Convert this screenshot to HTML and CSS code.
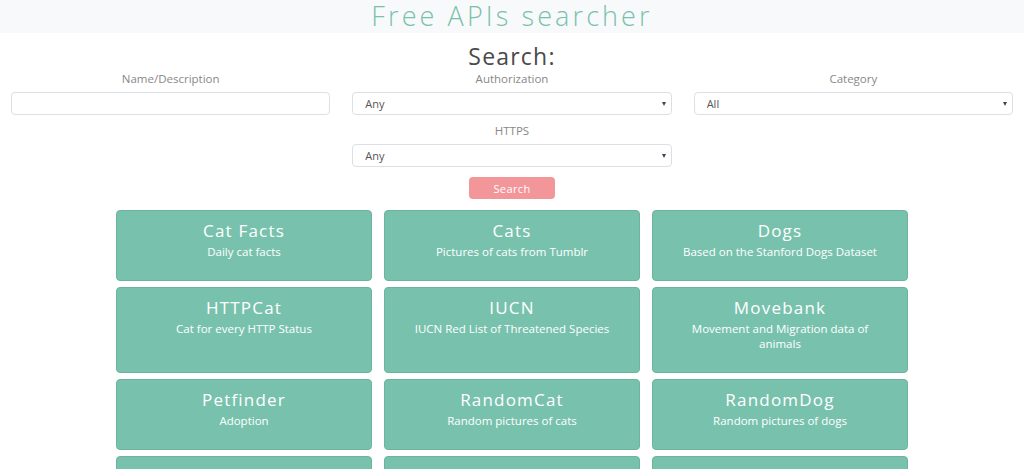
FILE: index.html
```html
<!DOCTYPE html>
<html lang="en">
<head>
<meta charset="utf-8">
<title>Free APIs searcher</title>
<link rel="stylesheet" href="styles.css">
</head>
<body>
<header class="topbar">
  <h1 class="brand">Free APIs searcher</h1>
</header>
<main class="page">
  <section class="search">
    <h2 class="search-title">Search:</h2>
    <div class="fields">
      <div class="field">
        <label class="field-label">Name/Description</label>
        <input class="control" type="text">
      </div>
      <div class="field">
        <label class="field-label">Authorization</label>
        <div class="select-wrap"><select class="control select"><option>Any</option></select></div>
      </div>
      <div class="field">
        <label class="field-label">Category</label>
        <div class="select-wrap"><select class="control select"><option>All</option></select></div>
      </div>
      <div class="field field-center">
        <label class="field-label">HTTPS</label>
        <div class="select-wrap"><select class="control select"><option>Any</option></select></div>
      </div>
    </div>
    <div class="actions"><button class="btn-search" type="button">Search</button></div>
  </section>
  <section class="cards">
    <article class="card"><h3 class="card-title">Cat Facts</h3><p class="card-desc">Daily cat facts</p></article>
    <article class="card"><h3 class="card-title">Cats</h3><p class="card-desc">Pictures of cats from Tumblr</p></article>
    <article class="card"><h3 class="card-title">Dogs</h3><p class="card-desc">Based on the Stanford Dogs Dataset</p></article>
    <article class="card"><h3 class="card-title">HTTPCat</h3><p class="card-desc">Cat for every HTTP Status</p></article>
    <article class="card"><h3 class="card-title">IUCN</h3><p class="card-desc">IUCN Red List of Threatened Species</p></article>
    <article class="card"><h3 class="card-title">Movebank</h3><p class="card-desc">Movement and Migration data of animals</p></article>
    <article class="card"><h3 class="card-title">Petfinder</h3><p class="card-desc">Adoption</p></article>
    <article class="card"><h3 class="card-title">RandomCat</h3><p class="card-desc">Random pictures of cats</p></article>
    <article class="card"><h3 class="card-title">RandomDog</h3><p class="card-desc">Random pictures of dogs</p></article>
    <article class="card"><h3 class="card-title">RandomFox</h3><p class="card-desc">Random pictures of foxes</p></article>
    <article class="card"><h3 class="card-title">RescueGroups</h3><p class="card-desc">Adoption</p></article>
    <article class="card"><h3 class="card-title">Shibe.Online</h3><p class="card-desc">Random pictures of Shibu Inu, cats or birds</p></article>
  </section>
</main>
</body>
</html>
```
FILE: styles.css
```css
* { box-sizing: border-box; }
html, body { margin: 0; padding: 0; }
body {
  font-family: "Open Sans", "Noto Sans", sans-serif;
  color: #888;
  background: #fff;
  overflow: hidden;
}
.topbar {
  height: 33px;
  background: #f8f9fa;
  text-align: center;
}
.brand {
  margin: 0;
  font-weight: 300;
  font-size: 27px;
  line-height: 32px;
  letter-spacing: 3.1px;
  color: #78c2ad;
}
.page { padding-bottom: 20px; }
.search { text-align: center; }
.search-title {
  margin: 8px 0 0;
  font-weight: 400;
  font-size: 23px;
  line-height: 30px;
  letter-spacing: 1.2px;
  color: #4a4a4a;
}
.fields {
  display: grid;
  grid-template-columns: repeat(3, 1fr);
  row-gap: 8px;
}
.field {
  padding: 0 11px;
  display: flex;
  flex-direction: column;
}
.field-center { grid-column: 2; }
.field-label {
  font-size: 11.5px;
  line-height: 16px;
  color: #888;
  margin-bottom: 5px;
  margin-top: 0;
}
.control {
  width: 100%;
  height: 23px;
  border: 1px solid #dcdfe3;
  border-radius: 4px;
  background: #fff;
  font-family: "Open Sans", sans-serif;
  font-size: 11px;
  color: #555;
  padding: 0 12px;
  outline: none;
}
.select-wrap { position: relative; }
.select {
  -webkit-appearance: none;
  appearance: none;
  display: block;
}
.select-wrap::after {
  content: "";
  position: absolute;
  right: 6px;
  top: 10px;
  border-left: 2.5px solid transparent;
  border-right: 2.5px solid transparent;
  border-top: 4px solid #444;
  pointer-events: none;
}
.actions { margin-top: 10px; }
.btn-search {
  display: inline-block;
  vertical-align: top;
  width: 86px;
  height: 22px;
  border: none;
  border-radius: 4px;
  background: #f3969a;
  color: #fff;
  font-family: "Open Sans", sans-serif;
  font-size: 11px;
  letter-spacing: 0.4px;
  padding: 0;
}
.cards {
  margin-top: 11px;
  display: grid;
  grid-template-columns: repeat(3, 256px);
  justify-content: center;
  gap: 6px 12px;
}
.card {
  background: #78c2ad;
  border: 1px solid #6db49f;
  border-radius: 4px;
  color: #fff;
  text-align: center;
  padding: 9px 22px 21px;
  min-height: 71px;
}
.card-title {
  margin: 0;
  font-weight: 400;
  font-size: 17px;
  line-height: 22px;
  letter-spacing: 1.2px;
}
.card-desc {
  margin: 2px 0 0;
  font-size: 11.5px;
  line-height: 15px;
}
```
